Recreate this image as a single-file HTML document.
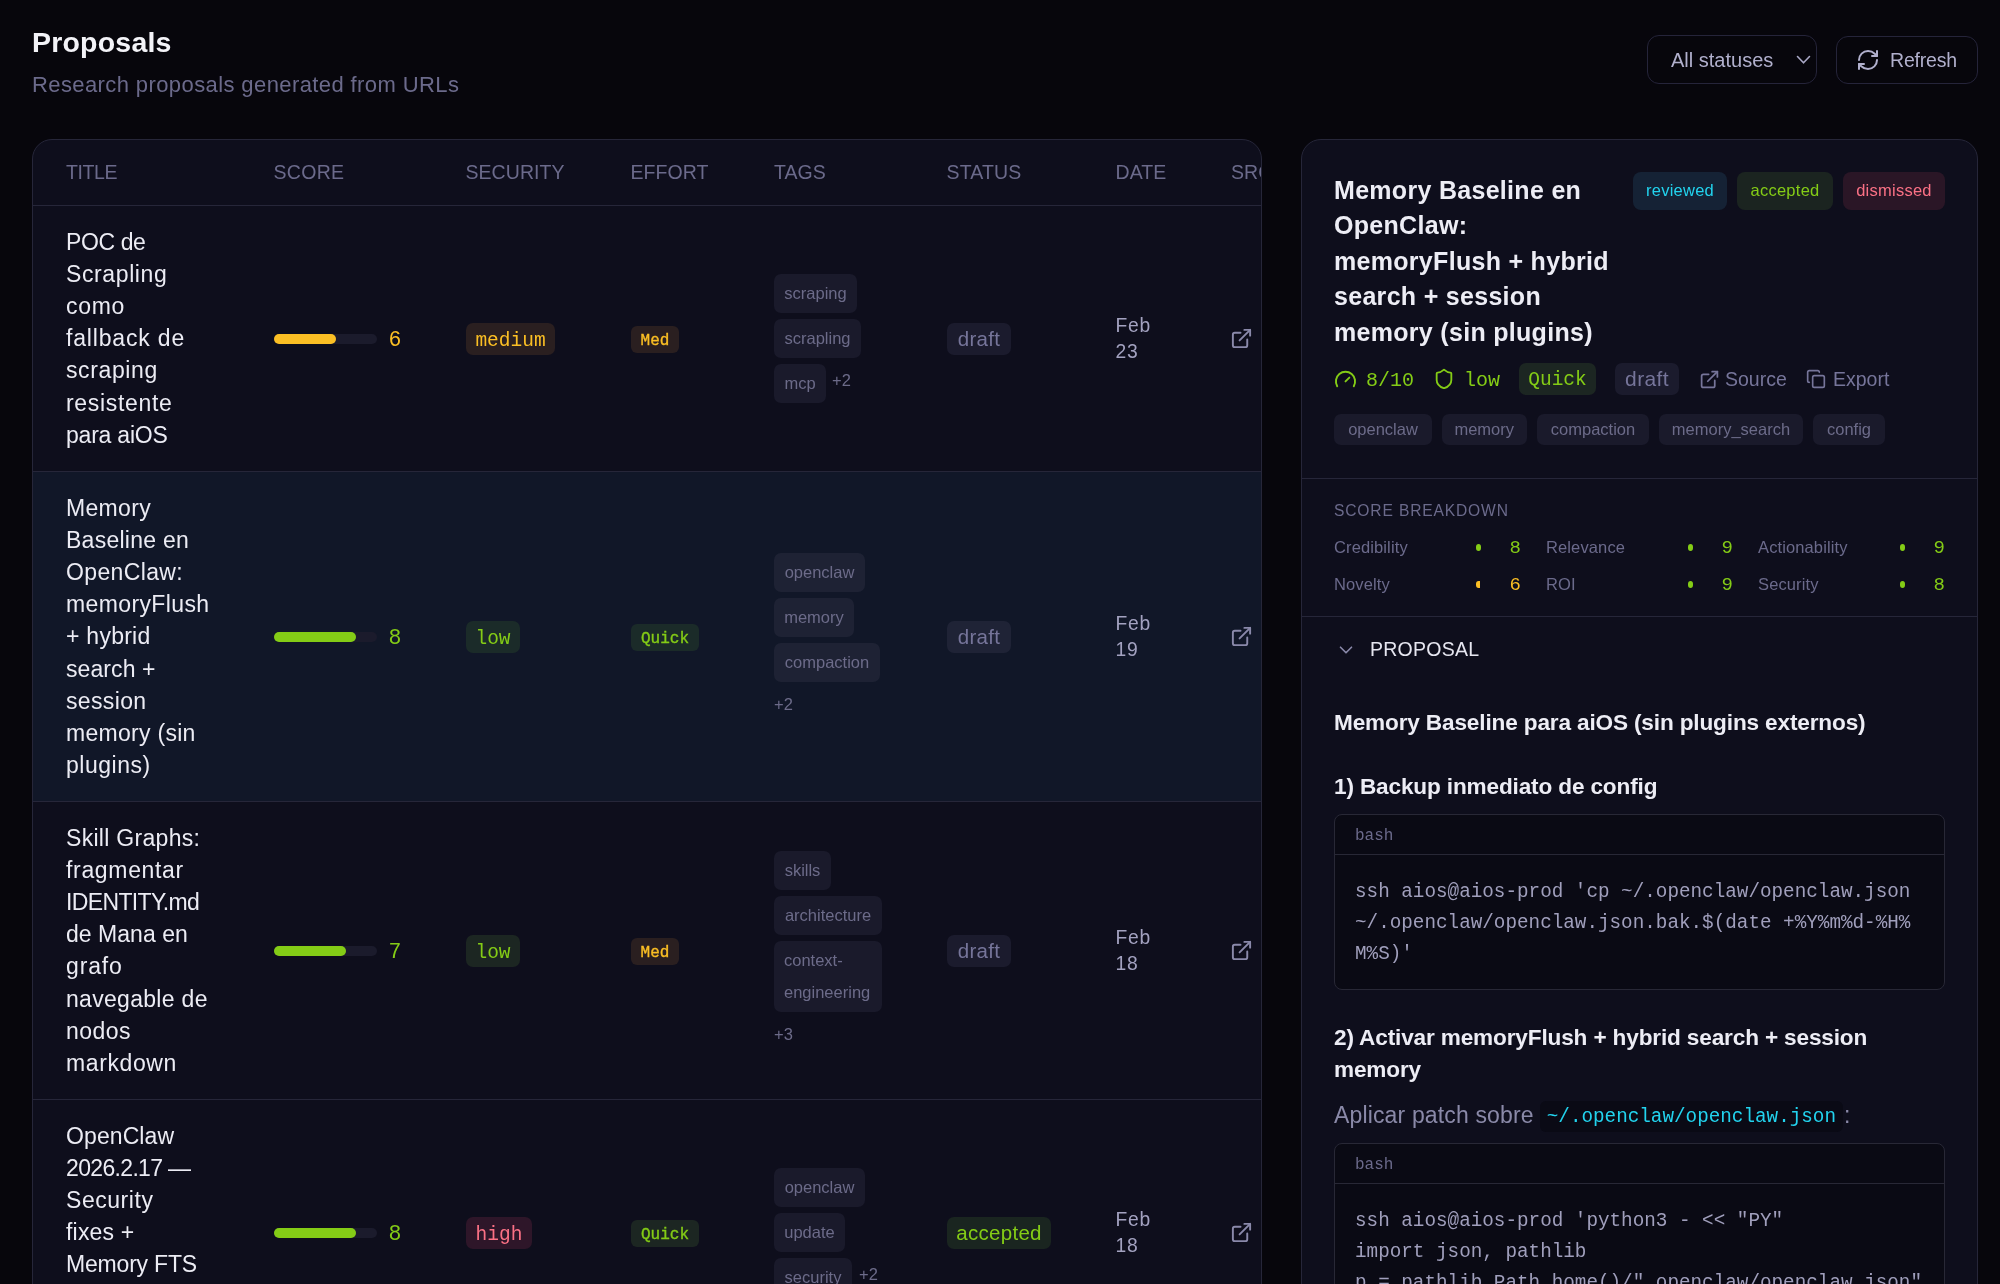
<!DOCTYPE html>
<html lang="en">
<head>
<meta charset="utf-8">
<title>Proposals</title>
<style>
*{box-sizing:border-box;margin:0;padding:0}
html,body{width:2000px;height:1284px;overflow:hidden;background:#07060c}
body{font-family:"Liberation Sans",sans-serif;color:#ececf4;position:relative}
#root{position:absolute;left:0;top:0;width:2000px;height:1284px;overflow:hidden;will-change:transform;background:transparent}
.abs{position:absolute}
.mono{font-family:"Liberation Mono",monospace}
.t{position:absolute;white-space:nowrap;line-height:1}
h1{position:absolute;left:32px;top:26px;font-size:28.5px;font-weight:700;line-height:32px;letter-spacing:.2px;color:#f3f3f8;white-space:nowrap}
.sub{position:absolute;left:32px;top:71px;font-size:22px;line-height:28px;letter-spacing:.4px;color:#6b6a8b;white-space:nowrap}
.btn{position:absolute;border:1px solid #25243a;border-radius:12px;color:#b1b0cd}
.card{position:absolute;background:#0e0e1c;border:1px solid #262639;border-radius:20px;overflow:hidden}
#tbl{left:32px;top:139px;width:1230px;height:1200px}
#pan{left:1301px;top:139px;width:677px;height:1200px}
.th{position:absolute;top:22px;font-size:19.5px;line-height:20px;letter-spacing:.05px;color:#6b6a8b;white-space:nowrap}
.hline{position:absolute;left:0;right:0;height:1px;background:#262639}
.row{position:absolute;left:0;width:1228px}
.row.sel{background:#111728}
.ttl{position:absolute;left:33px;font-size:23px;line-height:32.2px;letter-spacing:.3px;color:#ececf4;white-space:nowrap}
.bar{position:absolute;left:240.5px;width:103.5px;height:10px;border-radius:5px;background:#1b1b2c}
.bar i{display:block;height:10px;border-radius:5px}
.g{background:#84cc16}.y{background:#fbbf24}
.num{position:absolute;left:355.5px;font-family:"Liberation Mono",monospace;font-size:21.5px;line-height:20px;margin-top:1.5px}
.cg{color:#84cc16}.cy{color:#fbbf24}.cr{color:#fb7185}
.pill{position:absolute;border-radius:7px;text-align:center;white-space:nowrap}
.sec{font-family:"Liberation Mono",monospace;font-size:19.5px;height:31.5px;line-height:28px;padding-top:3.7px;left:433px}
.eff{font-family:"Liberation Mono",monospace;font-size:16px;-webkit-text-stroke:.35px currentColor;height:27px;line-height:24px;padding-top:3px;left:598px;border-radius:6px}
.bg-y{background:#2a1f20;color:#fbbf24}
.bg-g{background:#1c2622;color:#84cc16}
.bg-r{background:#2e1629;color:#fb7185}
.sel .bg-g{background:#1b2b29}
.tag{position:absolute;left:741px;height:39px;line-height:32.3px;padding-top:3.2px;border-radius:7px;background:#1a1a2b;color:#6c6b89;font-size:16.5px;text-align:center;white-space:nowrap}
.sel .tag{background:#1e2234}
.more{position:absolute;font-size:16.5px;line-height:18px;color:#6c6b89;white-space:nowrap}
.st{position:absolute;left:914px;height:31.5px;line-height:31.5px;border-radius:7px;font-size:20.5px;letter-spacing:.3px;text-align:center;white-space:nowrap;background:#1b1b2d;color:#76759a}
.sel .st{background:#1f2336}
.st.acc{background:#1a2520;color:#84cc16}
.date{position:absolute;left:1082.5px;font-size:19.3px;line-height:26px;letter-spacing:.8px;color:#a3a2c0;white-space:nowrap;margin-top:.5px}
.ext{position:absolute;left:1197px;width:23px;height:23px;margin-top:-.4px}
svg{display:block;overflow:visible}
.ptitle{position:absolute;left:32px;top:32.5px;font-size:25px;font-weight:700;line-height:35.5px;letter-spacing:.3px;color:#ededf5;white-space:nowrap}
.sbtn{position:absolute;top:32px;height:38px;line-height:37px;border-radius:8px;font-size:16.5px;letter-spacing:.25px;text-align:center;white-space:nowrap}
.ptag{position:absolute;top:274px;height:31px;line-height:30.6px;border-radius:7px;background:#1a1a2b;color:#6c6b89;font-size:16.5px;text-align:center;white-space:nowrap}
.lbl{position:absolute;font-size:16.5px;line-height:18px;letter-spacing:.12px;color:#6b6a8b;white-space:nowrap}
.sc{position:absolute;font-family:"Liberation Mono",monospace;font-size:19px;line-height:18px;width:19px;margin-top:.5px;text-align:right}
.dot{position:absolute;display:block;width:5px;height:6.6px;border-radius:50%}
.dot.half{width:4px;border-radius:2.5px 0 0 2.5px / 3.3px 0 0 3.3px}
.h{position:absolute;left:32px;font-size:22.6px;font-weight:700;line-height:32.2px;letter-spacing:-.15px;color:#ededf5;white-space:nowrap}
.p{position:absolute;left:32px;font-size:23px;line-height:32px;letter-spacing:.15px;color:#8a89a8;white-space:nowrap}
.ic{font-family:"Liberation Mono",monospace;font-size:19.3px;letter-spacing:0;color:#22d3ee;background:#0a0a15;border-radius:6px;padding:4.5px 7px 5px;margin:0 1px 0 6px;position:relative;top:-1.2px}
.code{position:absolute;left:32px;width:611px;background:#0a0a14;border:1px solid #282836;border-radius:8px;overflow:hidden}
.ch{height:40px;border-bottom:1px solid #282836;font-family:"Liberation Mono",monospace;font-size:16px;line-height:42px;padding-left:20px;color:#6b6a8b}
.code pre{font-family:"Liberation Mono",monospace;font-size:19.3px;line-height:31px;color:#a09fbc;padding:22px 20px 0 20px;margin:0}

</style>
</head>
<body>
<div id="root">
<h1>Proposals</h1>
<div class="sub">Research proposals generated from URLs</div>

<div class="btn" style="left:1647px;top:35px;width:170px;height:49px">
  <span class="t" style="left:23px;top:14px;font-size:20px;line-height:20px">All statuses</span>
  <svg class="abs" style="left:148px;top:19px" width="15" height="10" viewBox="0 0 15 10"><path d="M1.5 1.5 L7.5 7.8 L13.5 1.5" fill="none" stroke="#a9a8c6" stroke-width="1.6" stroke-linecap="round" stroke-linejoin="round"/></svg>
</div>
<div class="btn" style="left:1836px;top:36px;width:142px;height:48px">
  <svg class="abs" style="left:19px;top:11px" width="24" height="24" viewBox="0 0 24 24" fill="none" stroke="#b1b0cd" stroke-width="2" stroke-linecap="round" stroke-linejoin="round"><path d="M3 12a9 9 0 0 1 9-9 9.75 9.75 0 0 1 6.74 2.74L21 8"/><path d="M21 3v5h-5"/><path d="M21 12a9 9 0 0 1-9 9 9.75 9.75 0 0 1-6.74-2.74L3 16"/><path d="M8 16H3v5"/></svg>
  <span class="t" style="left:53px;top:13px;font-size:19.5px;line-height:20px;letter-spacing:-.2px">Refresh</span>
</div>

<!-- TABLE CARD -->
<div class="card" id="tbl">
  <div class="th" style="left:33px;letter-spacing:-.4px">TITLE</div>
  <div class="th" style="left:240.5px;letter-spacing:.3px">SCORE</div>
  <div class="th" style="left:432.5px">SECURITY</div>
  <div class="th" style="left:597.5px">EFFORT</div>
  <div class="th" style="left:741px">TAGS</div>
  <div class="th" style="left:913.5px;letter-spacing:.15px">STATUS</div>
  <div class="th" style="left:1082.5px">DATE</div>
  <div class="th" style="left:1198px">SRC</div>
  <div class="hline" style="top:65px"></div>
<!--ROWS_START-->
<div class="row" style="top:66px;height:265px">
  <div class="ttl" style="top:19.5px"><span style="letter-spacing:-0.40px">POC de</span><br><span style="letter-spacing:0.61px">Scrapling</span><br><span style="letter-spacing:0.68px">como</span><br><span style="letter-spacing:0.83px">fallback de</span><br><span style="letter-spacing:0.62px">scraping</span><br><span style="letter-spacing:0.68px">resistente</span><br><span style="letter-spacing:-0.21px">para aiOS</span></div>
  <div class="bar" style="top:127.8px"><i class="y" style="width:62.5px"></i></div>
  <div class="num cy" style="top:122.5px">6</div>
  <div class="pill sec bg-y" style="top:117.2px;width:89px">medium</div>
  <div class="pill eff bg-y" style="top:120.0px;width:48px">Med</div>
  <div class="tag" style="top:68.0px;width:83px;height:39px">scraping</div>
  <div class="tag" style="top:113.0px;width:87px;height:39px">scrapling</div>
  <div class="tag" style="top:158.0px;width:52px;height:39px">mcp</div>
  <div class="more" style="left:799px;top:165.0px">+2</div>
  <div class="st " style="top:117.2px;width:64px">draft</div>
  <div class="date" style="top:106.5px">Feb<br>23</div>
  <svg class="ext" style="top:121.0px" width="23" height="23" viewBox="0 0 24 24" fill="none" stroke="#8a89aa" stroke-width="2" stroke-linecap="round" stroke-linejoin="round"><path d="M15 3h6v6"/><path d="M10 14 21 3"/><path d="M18 13v6a2 2 0 0 1-2 2H5a2 2 0 0 1-2-2V8a2 2 0 0 1 2-2h6"/></svg>
</div>
<div class="hline" style="top:331px"></div>
<div class="row sel" style="top:332px;height:329px">
  <div class="ttl" style="top:19.5px"><span style="letter-spacing:0.33px">Memory</span><br><span style="letter-spacing:0.26px">Baseline en</span><br><span style="letter-spacing:0.36px">OpenClaw:</span><br><span style="letter-spacing:0.38px">memoryFlush</span><br><span style="letter-spacing:0.26px">+ hybrid</span><br><span style="letter-spacing:0.08px">search +</span><br><span style="letter-spacing:0.35px">session</span><br><span style="letter-spacing:0.29px">memory (sin</span><br><span style="letter-spacing:0.52px">plugins)</span></div>
  <div class="bar" style="top:159.8px"><i class="g" style="width:82.5px"></i></div>
  <div class="num cg" style="top:154.5px">8</div>
  <div class="pill sec bg-g" style="top:149.2px;width:54px">low</div>
  <div class="pill eff bg-g" style="top:152.0px;width:68px">Quick</div>
  <div class="tag" style="top:80.5px;width:91px;height:39px">openclaw</div>
  <div class="tag" style="top:125.5px;width:80px;height:39px">memory</div>
  <div class="tag" style="top:170.5px;width:106px;height:39px">compaction</div>
  <div class="more" style="left:741px;top:223.0px">+2</div>
  <div class="st " style="top:149.2px;width:64px">draft</div>
  <div class="date" style="top:138.5px">Feb<br>19</div>
  <svg class="ext" style="top:153.0px" width="23" height="23" viewBox="0 0 24 24" fill="none" stroke="#8a89aa" stroke-width="2" stroke-linecap="round" stroke-linejoin="round"><path d="M15 3h6v6"/><path d="M10 14 21 3"/><path d="M18 13v6a2 2 0 0 1-2 2H5a2 2 0 0 1-2-2V8a2 2 0 0 1 2-2h6"/></svg>
</div>
<div class="hline" style="top:661px"></div>
<div class="row" style="top:662px;height:297px">
  <div class="ttl" style="top:19.5px"><span style="letter-spacing:0.30px">Skill Graphs:</span><br><span style="letter-spacing:0.67px">fragmentar</span><br><span style="letter-spacing:-0.64px">IDENTITY.md</span><br><span style="letter-spacing:0.03px">de Mana en</span><br><span style="letter-spacing:0.84px">grafo</span><br><span style="letter-spacing:0.30px">navegable de</span><br><span style="letter-spacing:0.46px">nodos</span><br><span style="letter-spacing:0.61px">markdown</span></div>
  <div class="bar" style="top:143.8px"><i class="g" style="width:72.5px"></i></div>
  <div class="num cg" style="top:138.5px">7</div>
  <div class="pill sec bg-g" style="top:133.2px;width:54px">low</div>
  <div class="pill eff bg-y" style="top:136.0px;width:48px">Med</div>
  <div class="tag" style="top:48.5px;width:57px;height:39px">skills</div>
  <div class="tag" style="top:93.7px;width:108px;height:39px">architecture</div>
  <div class="tag" style="top:139.0px;width:108px;height:70.5px"><span style="display:block;text-align:left;padding-left:10px">context-<br>engineering</span></div>
  <div class="more" style="left:741px;top:223.4px">+3</div>
  <div class="st " style="top:133.2px;width:64px">draft</div>
  <div class="date" style="top:122.5px">Feb<br>18</div>
  <svg class="ext" style="top:137.0px" width="23" height="23" viewBox="0 0 24 24" fill="none" stroke="#8a89aa" stroke-width="2" stroke-linecap="round" stroke-linejoin="round"><path d="M15 3h6v6"/><path d="M10 14 21 3"/><path d="M18 13v6a2 2 0 0 1-2 2H5a2 2 0 0 1-2-2V8a2 2 0 0 1 2-2h6"/></svg>
</div>
<div class="hline" style="top:959px"></div>
<div class="row" style="top:960px;height:265px">
  <div class="ttl" style="top:19.5px"><span style="letter-spacing:0.10px">OpenClaw</span><br><span style="letter-spacing:-0.66px">2026.2.17 —</span><br><span style="letter-spacing:0.55px">Security</span><br><span style="letter-spacing:0.19px">fixes +</span><br><span style="letter-spacing:-0.19px">Memory FTS</span><br>parity +<br>Slack fixes</div>
  <div class="bar" style="top:127.8px"><i class="g" style="width:82.5px"></i></div>
  <div class="num cg" style="top:122.5px">8</div>
  <div class="pill sec bg-r" style="top:117.2px;width:66px">high</div>
  <div class="pill eff bg-g" style="top:120.0px;width:68px">Quick</div>
  <div class="tag" style="top:68.0px;width:91px;height:39px">openclaw</div>
  <div class="tag" style="top:113.0px;width:71px;height:39px">update</div>
  <div class="tag" style="top:158.0px;width:78px;height:39px">security</div>
  <div class="more" style="left:826px;top:165.0px">+2</div>
  <div class="st acc" style="top:117.2px;width:104px">accepted</div>
  <div class="date" style="top:106.5px">Feb<br>18</div>
  <svg class="ext" style="top:121.0px" width="23" height="23" viewBox="0 0 24 24" fill="none" stroke="#8a89aa" stroke-width="2" stroke-linecap="round" stroke-linejoin="round"><path d="M15 3h6v6"/><path d="M10 14 21 3"/><path d="M18 13v6a2 2 0 0 1-2 2H5a2 2 0 0 1-2-2V8a2 2 0 0 1 2-2h6"/></svg>
</div>
<div class="hline" style="top:1225px"></div>
<!--ROWS_END-->
</div>

<!-- DETAIL PANEL -->
<div class="card" id="pan">
<!--PANEL_START-->
  <div class="ptitle">Memory Baseline en<br>OpenClaw:<br>memoryFlush + hybrid<br>search + session<br>memory (sin plugins)</div>
  <div class="sbtn" style="left:331px;width:94px;background:#152235;color:#22d3ee">reviewed</div>
  <div class="sbtn" style="left:435px;width:96px;background:#1b2420;color:#84cc16">accepted</div>
  <div class="sbtn" style="left:541px;width:102px;background:#2a1626;color:#fb7185">dismissed</div>

  <!-- meta row (centre y=379 => rel 239) -->
  <svg class="abs" style="left:32px;top:228px" width="23" height="23" viewBox="0 0 24 24" fill="none" stroke="#84cc16" stroke-width="2" stroke-linecap="round" stroke-linejoin="round"><path d="m12 14 4-4"/><path d="M3.34 19a10 10 0 1 1 17.32 0"/></svg>
  <span class="t mono cg" style="left:64px;top:230.5px;font-size:20px;line-height:20px">8/10</span>
  <svg class="abs" style="left:131px;top:228px" width="22" height="22" viewBox="0 0 24 24" fill="none" stroke="#84cc16" stroke-width="2" stroke-linecap="round" stroke-linejoin="round"><path d="M20 13c0 5-3.5 7.5-7.66 8.95a1 1 0 0 1-.67-.01C7.5 20.5 4 18 4 13V6a1 1 0 0 1 1-1c2 0 4.5-1.2 6.24-2.72a1.17 1.17 0 0 1 1.52 0C14.51 3.81 17 5 19 5a1 1 0 0 1 1 1z"/></svg>
  <span class="t mono cg" style="left:162px;top:230.5px;font-size:20px;line-height:20px">low</span>
  <div class="pill mono bg-g" style="left:217px;top:223px;width:77px;height:32px;line-height:29px;padding-top:3px;font-size:19.5px">Quick</div>
  <div class="pill" style="left:313px;top:223px;width:64px;height:32px;line-height:32px;font-size:21px;letter-spacing:.35px;background:#1b1b2d;color:#76759a">draft</div>
  <svg class="abs" style="left:396.5px;top:228.5px" width="21" height="21" viewBox="0 0 24 24" fill="none" stroke="#76759a" stroke-width="2" stroke-linecap="round" stroke-linejoin="round"><path d="M15 3h6v6"/><path d="M10 14 21 3"/><path d="M18 13v6a2 2 0 0 1-2 2H5a2 2 0 0 1-2-2V8a2 2 0 0 1 2-2h6"/></svg>
  <span class="t" style="left:423px;top:229px;font-size:19.5px;line-height:20px;color:#76759a">Source</span>
  <svg class="abs" style="left:504px;top:229px" width="20" height="20" viewBox="0 0 24 24" fill="none" stroke="#76759a" stroke-width="2" stroke-linecap="round" stroke-linejoin="round"><rect width="14" height="14" x="8" y="8" rx="2" ry="2"/><path d="M4 16c-1.1 0-2-.9-2-2V4c0-1.1.9-2 2-2h10c1.1 0 2 .9 2 2"/></svg>
  <span class="t" style="left:531px;top:229px;font-size:19.5px;line-height:20px;color:#76759a">Export</span>

  <!-- tags row 414.5-445 => rel 274.5 -->
  <div class="ptag" style="left:32px;width:98px">openclaw</div>
  <div class="ptag" style="left:139.5px;width:85.5px">memory</div>
  <div class="ptag" style="left:235px;width:112px">compaction</div>
  <div class="ptag" style="left:357px;width:144px">memory_search</div>
  <div class="ptag" style="left:511px;width:72px">config</div>

  <div class="hline" style="top:338px"></div>
  <div class="t" style="left:32px;top:363px;font-size:15.6px;line-height:16px;letter-spacing:.85px;color:#6b6a8b">SCORE BREAKDOWN</div>

  <div class="lbl" style="left:32px;top:398px">Credibility</div><i class="dot g" style="left:174px;top:404px"></i><span class="sc cg" style="left:200px;top:398px">8</span>
  <div class="lbl" style="left:244px;top:398px">Relevance</div><i class="dot g" style="left:386px;top:404px"></i><span class="sc cg" style="left:412px;top:398px">9</span>
  <div class="lbl" style="left:456px;top:398px">Actionability</div><i class="dot g" style="left:598px;top:404px"></i><span class="sc cg" style="left:624px;top:398px">9</span>
  <div class="lbl" style="left:32px;top:435px">Novelty</div><i class="dot y half" style="left:174px;top:441px"></i><span class="sc cy" style="left:200px;top:435px">6</span>
  <div class="lbl" style="left:244px;top:435px">ROI</div><i class="dot g" style="left:386px;top:441px"></i><span class="sc cg" style="left:412px;top:435px">9</span>
  <div class="lbl" style="left:456px;top:435px">Security</div><i class="dot g" style="left:598px;top:441px"></i><span class="sc cg" style="left:624px;top:435px">8</span>

  <div class="hline" style="top:476px"></div>

  <svg class="abs" style="left:33px;top:499px" width="22" height="22" viewBox="0 0 24 24" fill="none" stroke="#8a89aa" stroke-width="1.8" stroke-linecap="round" stroke-linejoin="round"><path d="m6 9 6 6 6-6"/></svg>
  <div class="t" style="left:68px;top:499px;font-size:19.5px;line-height:20px;letter-spacing:.25px;color:#e6e6f0">PROPOSAL</div>

  <div class="h" style="top:567px">Memory Baseline para aiOS (sin plugins externos)</div>
  <div class="h" style="top:631px">1) Backup inmediato de config</div>

  <div class="code" style="top:674px;height:176px">
    <div class="ch">bash</div>
    <pre>ssh aios@aios-prod 'cp ~/.openclaw/openclaw.json
~/.openclaw/openclaw.json.bak.$(date +%Y%m%d-%H%
M%S)'</pre>
  </div>

  <div class="h" style="top:882px">2) Activar memoryFlush + hybrid search + session<br>memory</div>
  <div class="p" style="top:958.5px">Aplicar patch sobre<span class="ic">~/.openclaw/openclaw.json</span>:</div>

  <div class="code" style="top:1003px;height:300px">
    <div class="ch">bash</div>
    <pre>ssh aios@aios-prod 'python3 - &lt;&lt; "PY"
import json, pathlib
p = pathlib.Path.home()/".openclaw/openclaw.json"
cfg = json.loads(p.read_text())</pre>
  </div>
<!--PANEL_END-->

</div>
</div>
</body>
</html>
